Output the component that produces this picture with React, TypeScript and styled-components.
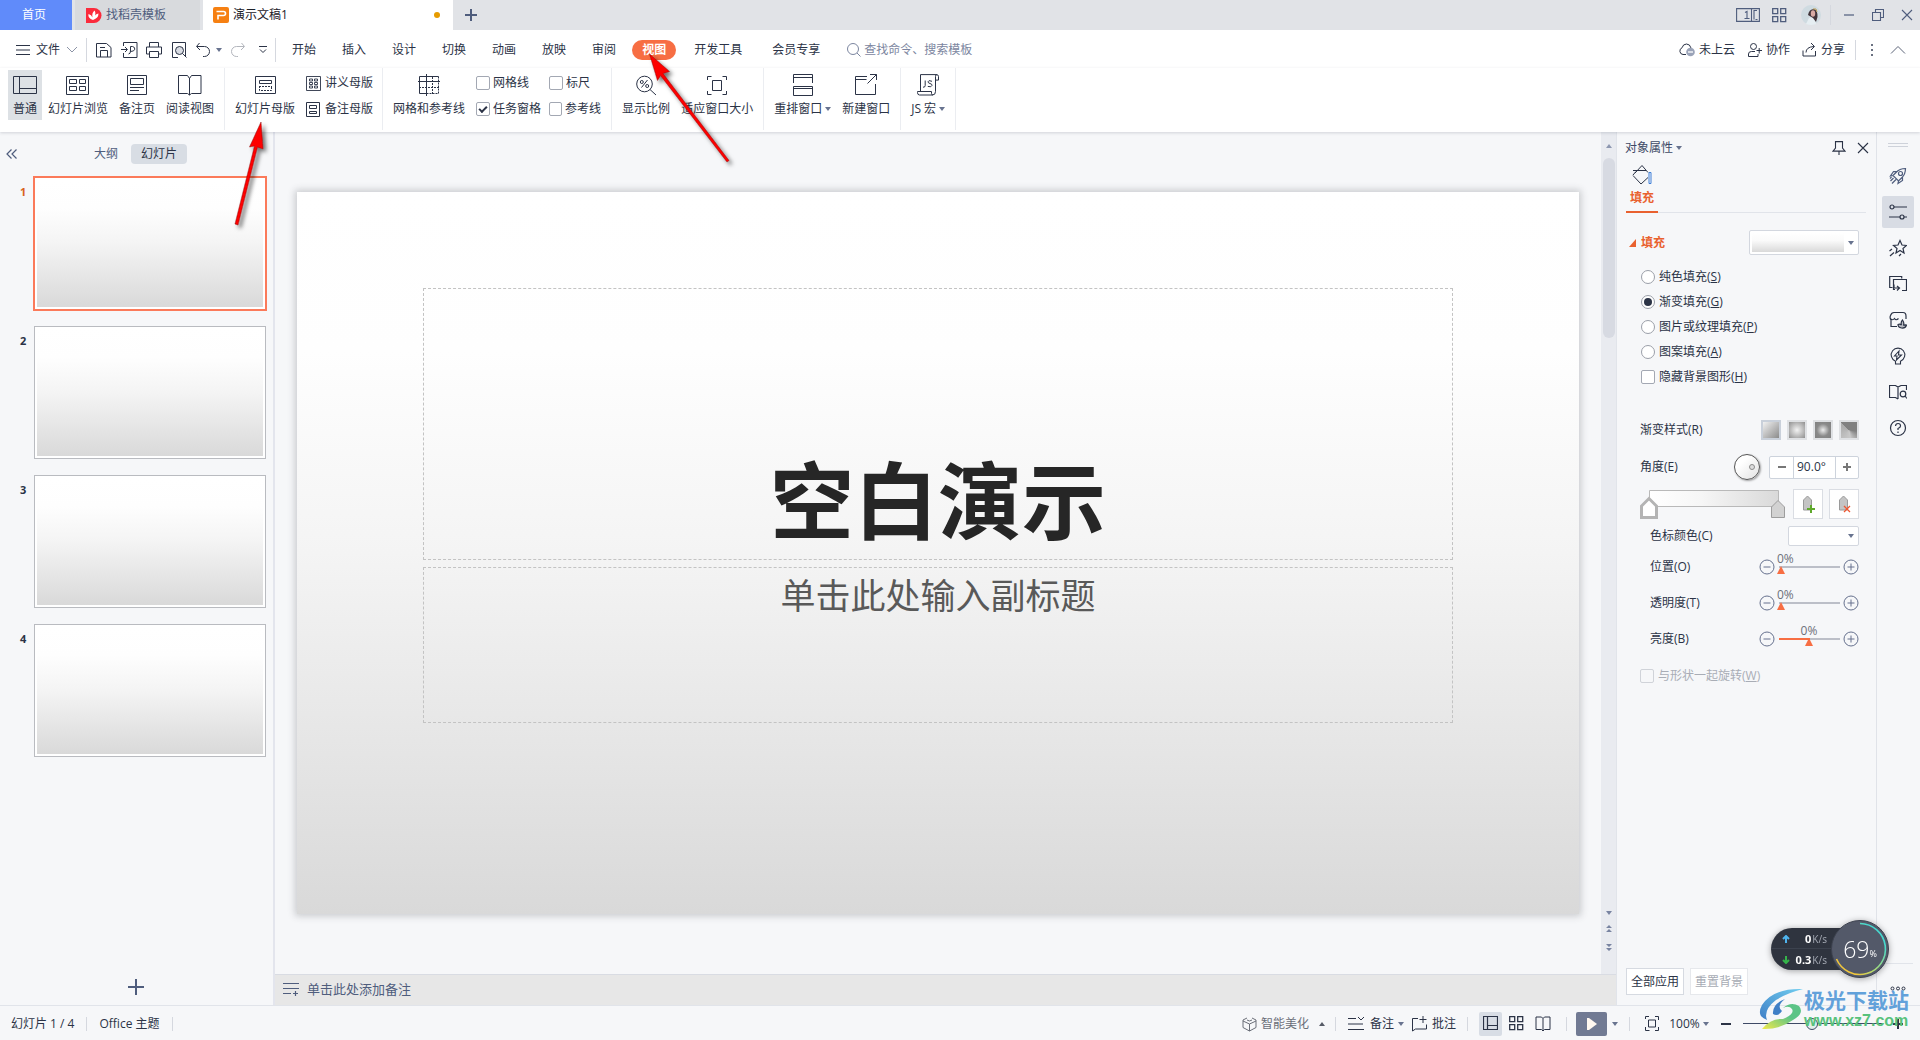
import React, { ReactNode } from "react";
import styled, { createGlobalStyle, css } from "styled-components";

const ink = "#2b3346";
const slate = "#4f5d7d";
const accent = "#e9612f";
const line = "#e1e4ea";
const panel = "#f6f7f9";
const slideFill = "linear-gradient(180deg, #ffffff 0%, #fefefe 22%, #f4f4f4 50%, #d9d9d9 100%)";

const Global = createGlobalStyle`
  *, *::before, *::after { box-sizing: border-box; }
  body { margin: 0; }
  body, button, input, select, output {
    font-family: "Open Sans", "Noto Sans CJK SC", sans-serif;
    font-size: 12px;
    line-height: 16px;
    color: ${ink};
  }
  button {
    margin: 0; padding: 0; border: 0; background: none; white-space: nowrap;
    display: inline-flex; align-items: center; justify-content: center;
  }
  svg { display: block; flex: none; }
`;

/* ---------- icons ---------- */

type IconProps = { w?: number; h?: number; color?: string; sw?: number; children: ReactNode };
const Icon = ({ w = 16, h = 16, color = ink, sw = 1, children }: IconProps) => (
  <svg width={w} height={h} viewBox={`0 0 ${w} ${h}`} fill="none" stroke={color} strokeWidth={sw} aria-hidden="true">
    {children}
  </svg>
);

const Caret = ({ color = "#68738f", up = false }: { color?: string; up?: boolean }) => (
  <svg width="6" height="4" viewBox="0 0 6 4" fill={color} aria-hidden="true">
    <path d={up ? "M0 4h6L3 0z" : "M0 0h6L3 4z"} />
  </svg>
);

const NormalIcon = () => (
  <Icon w={24} h={22}>
    <path d="M.5 2.5h23v17H.5zM6.5 2.5v17M6.5 14.5h17" />
  </Icon>
);
const SorterIcon = () => (
  <Icon w={24} h={22}>
    <path d="M.5 2.5h22v18H.5zM3.5 5.500h7v4h-7zM13.500 5.500h6v4h-6zM3.500 12.500h7v4h-7zM13.500 12.500h6v4h-6z" />
  </Icon>
);
const NotesPageIcon = () => (
  <Icon w={20} h={22}>
    <path d="M.5 1.500h19v19H.500zM3.500 4.500h13v6h-13zM3 13.500h14M3 16.500h9" />
  </Icon>
);
const BookIcon = () => (
  <Icon w={24} h={22}>
    <path d="M11.500 4.500l-2-3h-9v18h9l2 1.500 2-1.500h9.500V1.500h-9.500zM11.500 4v17" />
  </Icon>
);
const MasterIcon = () => (
  <Icon w={21} h={22}>
    <path d="M.5 2.500h20v17H.500zM4.500 6.500h12v3h-12z" />
    <path d="M4.500 12v4.500h12V12M4 12.500h13" strokeDasharray="2 1" />
  </Icon>
);
const HandoutIcon = () => (
  <Icon w={15} h={15}>
    <path d="M.5 .500h14v14H.500zM3.500 3h3v2h-3zM8.500 3h3v2h-3zM3.500 6.500h3v2h-3zM8.500 6.500h3v2h-3zM3.500 10h3v2h-3zM8.500 10h3v2h-3z" strokeWidth=".9" />
  </Icon>
);
const NotesMasterIcon = () => (
  <Icon w={15} h={15}>
    <path d="M.5 .500h13v14H.500zM3.500 3.500h7v3h-7zM3.500 9.500h7v2h-7z" />
  </Icon>
);
const GridIcon = () => (
  <Icon w={22} h={22}>
    <path d="M20.500 2.500H1.500v17h7M0 7.500h22M8.500 0v22" />
    <path d="M14.500 3v17M1 13.500h20M20.500 2.500v17h-12" strokeDasharray="2 1" />
  </Icon>
);
const ZoomIcon = () => (
  <Icon w={21} h={22}>
    <circle cx="8.500" cy="10" r="7.800" />
    <path d="M14 15.500l6 5.500M5.500 13.500l6-7.500" />
    <circle cx="5.800" cy="8" r="1.500" />
    <circle cx="11.200" cy="12" r="1.500" />
  </Icon>
);
const FitIcon = () => (
  <Icon w={20} h={22}>
    <path d="M.5 6V2.500h4M15.500 2.500h4V6M.5 17v3.500h4M15.500 20.500h4V17M5.500 6.500h9v10h-9z" />
  </Icon>
);
const ArrangeIcon = () => (
  <Icon w={20} h={22}>
    <path d="M.500 9V.500h19V9M0 3.500h20M.500 12.500h19v9H.500zM0 14.500h20" />
  </Icon>
);
const NewWindowIcon = () => (
  <Icon w={22} h={22}>
    <path d="M12 2.500H.500v18h20V10M.500 5.500h11M12.500 9.500l9-9M15 .500h6.500V6" />
  </Icon>
);
const MacroIcon = () => (
  <Icon w={22} h={22}>
    <path d="M3.500 17V.600h16q2 0 2 2v3.500h-3V2.500q0-2 1.500-2M18.500 6v11.500q0 3.500-3 3.500H2.500Q.500 21 .500 18.500V17.500h14v2q0 1.500 1.500 1.500" />
    <path d="M8.200 6.500v5q0 2-2.200 1.700M15 7.300q-3.800-1.600-4 .5 0 1.200 2 1.700 2.200.5 2 1.900-.500 2.200-4.200 1" />
  </Icon>
);

const SaveIcon = () => (
  <Icon>
    <path d="M.500 1.500h10l4.500 4v9.500H.500zM4.500 15V8.500h7V15M4 5.500h5" />
  </Icon>
);
const ExportIcon = () => (
  <Icon w={17}>
    <path d="M2.500 4V.500h13.500v15H2.500V11M0 7.500h6M4 5l2.500 2.500L4 10M7.500 12q2 0 2-3V4.500h2q2.500.5 2.300 2.700-.5 2.300-4.300 2.300" />
  </Icon>
);
const PrintIcon = () => (
  <Icon>
    <path d="M3.500 5V.500h9V5M3.500 12H.500V5h15v7h-3M3.500 9.500h9v6h-9z" />
  </Icon>
);
const PreviewIcon = () => (
  <Icon>
    <path d="M7 15.500H1.500V.500h13V15" />
    <circle cx="8.500" cy="8.500" r="4" fill="#d9dce3" />
    <path d="M11.500 11.500l4 4" />
  </Icon>
);
const UndoIcon = ({ flip = false, color = ink }: { flip?: boolean; color?: string }) => (
  <Icon color={color}>
    <g transform={flip ? "matrix(-1 0 0 1 16 0)" : undefined}>
      <path d="M4.500 1L1.500 4.500 5 8M2 4.500h7.500a5 5 0 010 10H8" />
    </g>
  </Icon>
);
const FourSquares = ({ color = ink }: { color?: string }) => (
  <Icon w={15} h={15} color={color}>
    <path d="M.700 .700h5v5h-5zM8.700 .700h5v5h-5zM.700 8.700h5v5h-5zM8.700 8.700h5v5h-5z" strokeWidth="1.300" />
  </Icon>
);
const SmallNormal = () => (
  <Icon w={15} h={15}>
    <path d="M.500 .500h14v13H.500zM4.500 .500v13M4.500 9.500h10" strokeWidth="1.200" />
  </Icon>
);
const SmallBook = () => (
  <Icon w={16}>
    <path d="M8 2.500L6.500 1H1v12.500h5.500L8 15l1.500-1.500H15V1H9.500zM8 2.500V15" />
  </Icon>
);
const CloseX = ({ color = slate }: { color?: string }) => (
  <Icon w={12} h={12} color={color}>
    <path d="M1 1l10 10M11 1L1 11" strokeWidth="1.100" />
  </Icon>
);

/* ---------- title bar ---------- */

const Shell = styled.div`
  position: relative;
  display: flex;
  flex-direction: column;
  min-height: 100vh;
  background: ${panel};
  overflow: hidden;
`;
const TitleBar = styled.header`
  display: flex;
  align-items: center;
  gap: 3px;
  height: 30px;
  background: #e1e3e7;
`;
const DocTab = styled.button<{ $kind: "home" | "idle" | "open" }>`
  && { justify-content: ${(p) => (p.$kind === "home" ? "center" : "flex-start")}; }
  height: 30px;
  width: ${(p) => ({ home: 72, idle: 125, open: 250 })[p.$kind]}px;
  padding: ${(p) => (p.$kind === "home" ? "0 4px 0 0" : "0 10px")};
  gap: 4px;
  background: ${(p) => ({ home: "#608bfa", idle: "#d8dadd", open: "#fff" })[p.$kind]};
  color: ${(p) => ({ home: "#fff", idle: slate, open: "#1d2129" })[p.$kind]};
`;
const UnsavedDot = styled.i`
  width: 6px;
  height: 6px;
  margin-left: auto;
  margin-right: 3px;
  border-radius: 50%;
  background: #e69b00;
`;
const IconButton = styled.button<{ $w?: number }>`
  width: ${(p) => p.$w ?? 24}px;
  height: 24px;
`;
const Push = styled.div`
  margin-left: auto;
`;
const WindowTools = styled.div`
  display: flex;
  align-items: center;
  gap: 5px;
  margin-left: auto;
  padding-right: 1px;
`;
const Rule = styled.span<{ $h?: number; $m?: number }>`
  width: 1px;
  height: ${(p) => p.$h ?? 20}px;
  margin: 0 ${(p) => p.$m ?? 0}px;
  background: #d5d8df;
`;

/* ---------- menu row ---------- */

const MenuRow = styled.div`
  display: flex;
  align-items: center;
  height: 38px;
  padding: 1px 14px 0 13px;
  background: #fff;
`;
const FileButton = styled.button`
  gap: 6px;
  padding: 0 8px 0 3px;
`;
const QuickTools = styled.div`
  display: flex;
  align-items: center;
  gap: 1px;
  padding: 0 2px 0 5px;
`;
const MenuTabs = styled.nav`
  display: flex;
  gap: 6px;
  padding-left: 6px;
`;
const MenuTab = styled.button<{ $wide?: boolean; $on?: boolean }>`
  height: 20px;
  padding: 0 ${(p) => (p.$wide ? 12 : 10)}px;
  border-radius: 10px;
  ${(p) =>
    p.$on &&
    css`
      background: #f76e43;
      color: #fff;
      font-weight: 700;
    `}
`;
const Search = styled.label`
  display: flex;
  align-items: center;
  gap: 2px;
  padding-left: 14px;
`;
const SearchInput = styled.input`
  width: 160px;
  padding: 0;
  border: 0;
  outline: 0;
  background: none;
  &::placeholder { color: #7c86a0; opacity: 1; }
`;
const Cloud = styled.div`
  display: flex;
  align-items: center;
  gap: 12px;
  margin-left: auto;
`;
const CloudButton = styled.button`
  gap: 4px;
`;

/* ---------- ribbon ---------- */

const Ribbon = styled.div`
  position: relative;
  z-index: 1;
  display: flex;
  height: 64px;
  padding-bottom: 2px;
  background: #fff;
  box-shadow: 0 1px 3px rgba(40, 50, 70, 0.18);
`;
const Group = styled.div<{ $first?: boolean }>`
  display: flex;
  align-items: flex-start;
  gap: 1px;
  padding: 2px 5px 0 ${(p) => (p.$first ? 8 : 5)}px;
  border-right: 1px solid #ebedf1;
`;
const BigButton = styled.button<{ $on?: boolean }>`
  && { flex-direction: column; justify-content: flex-start; }
  height: 50px;
  padding: 4px 5px 0;
  gap: 5px;
  background: ${(p) => (p.$on ? "#dde1e5" : "none")};
`;
const Caption = styled.span`
  display: inline-flex;
  align-items: center;
  gap: 3px;
`;
const SmallStack = styled.div`
  display: grid;
  grid-auto-rows: 26px;
  padding: 0 4px 0 5px;
`;
const SmallButton = styled.button`
  gap: 4px;
`;
const CheckGrid = styled.div`
  display: grid;
  grid-template-columns: 73px 52px;
  grid-auto-rows: 26px;
  padding: 0 5px;
`;
const CheckLabel = styled.label<{ $dim?: boolean; $gap?: number }>`
  display: flex;
  align-items: center;
  gap: ${(p) => p.$gap ?? 3}px;
  white-space: nowrap;
  color: ${(p) => (p.$dim ? "#a9adb6" : "inherit")};
`;
const Tick = styled.input.attrs({ type: "checkbox" })`
  appearance: none;
  display: grid;
  place-items: center;
  width: 14px;
  height: 14px;
  margin: 0;
  border: 1px solid #a3a8b3;
  border-radius: 2px;
  background: #fff;
  &:checked::after {
    content: "";
    width: 8px;
    height: 5px;
    border: solid ${ink};
    border-width: 0 0 2px 2px;
    transform: translateY(-1px) rotate(-45deg);
  }
  &:disabled { border-color: #d0d3d9; background: ${panel}; }
`;

/* ---------- workspace ---------- */

const Workspace = styled.main`
  display: flex;
  flex: 1;
  align-items: stretch;
`;
const Outline = styled.aside`
  display: flex;
  flex-direction: column;
  width: 275px;
  border-right: 2px solid #e3e5ed;
`;
const OutlineHead = styled.div`
  display: flex;
  align-items: center;
  height: 44px;
  padding-left: 6px;
`;
const OutlineTab = styled.button<{ $on?: boolean }>`
  width: ${(p) => (p.$on ? 56 : 50)}px;
  height: 20px;
  border-radius: 4px;
  background: ${(p) => (p.$on ? "#d8dde4" : "none")};
  color: ${(p) => (p.$on ? ink : slate)};
`;
const OutlineTabs = styled.div`
  display: flex;
  margin-left: 63px;
`;
const ThumbList = styled.ol`
  display: grid;
  gap: 14px;
  margin: 0;
  padding: 0 6px 0 20px;
  list-style: none;
`;
const ThumbItem = styled.li<{ $on?: boolean }>`
  display: grid;
  grid-template-columns: 13px 1fr;
  height: 135px;
  font-family: "Noto Sans", sans-serif;
  font-size: 11px;
  font-weight: 700;
  color: ${(p) => (p.$on ? "#d9631e" : ink)};
  & > span { padding-top: 8px; }
`;
const Thumb = styled.button<{ $on?: boolean }>`
  margin: ${(p) => (p.$on ? 0 : 1)}px;
  padding: 2px;
  border: ${(p) => (p.$on ? "2px solid #fb7a5a" : "1px solid #b9bbc0")};
  background: #fff;
  & > i { flex: 1; align-self: stretch; background: ${slideFill}; }
`;
const AddSlide = styled.button`
  && { margin: auto auto 10px 128px; }
`;

const Stage = styled.section`
  display: flex;
  flex: 1;
  flex-direction: column;
  min-width: 0;
`;
const StageBody = styled.div`
  display: flex;
  flex: 1;
  border-bottom: 1px solid #d9dce3;
`;
const Canvas = styled.div`
  display: flex;
  flex: 1;
  align-items: center;
  padding: 0 22px;
`;
const Slide = styled.article`
  display: grid;
  grid-template-rows: 96fr 271fr 7fr 156fr 191fr;
  width: 100%;
  aspect-ratio: 16 / 9;
  padding: 0 126px;
  background: ${slideFill};
  box-shadow: 0 0 7px 2px rgba(60, 64, 72, 0.24);
`;
const Holder = styled.div<{ $row: number; $end?: boolean }>`
  grid-row: ${(p) => p.$row};
  display: flex;
  justify-content: center;
  align-items: ${(p) => (p.$end ? "flex-end" : "flex-start")};
  padding: ${(p) => (p.$end ? "0 0 12px" : "5px 0 0")};
  border: 1px dashed #c3c3c3;
`;
const Title = styled.h1`
  margin: 0;
  font-family: "Noto Sans CJK SC", sans-serif;
  font-size: 84px;
  line-height: 100px;
  font-weight: 700;
  color: #262626;
`;
const Subtitle = styled.p`
  margin: 0;
  font-family: "Noto Sans CJK SC", sans-serif;
  font-size: 35px;
  line-height: 42px;
  font-weight: 400;
  color: #595959;
`;
const ScrollBar = styled.div`
  display: flex;
  flex-direction: column;
  align-items: center;
  width: 15px;
  padding: 12px 0 23px;
  gap: 10px;
  background: #e9ebf0;
`;
const ScrollThumb = styled.i`
  width: 12px;
  height: 180px;
  margin-bottom: auto;
  border-radius: 6px;
  background: #d7dae2;
`;
const Notes = styled.div`
  display: flex;
  align-items: center;
  gap: 8px;
  height: 30px;
  padding: 0 0 2px 8px;
  background: #e7e7e7;
  color: ${slate};
  font-size: 13px;
`;

/* ---------- properties panel ---------- */

const Props = styled.aside`
  display: flex;
  flex-direction: column;
  width: 261px;
  padding: 0 10px 0 9px;
  border-left: 1px solid ${line};
  border-right: 1px solid #e0e3e9;
`;
const PropsHead = styled.div`
  display: flex;
  align-items: center;
  gap: 8px;
  height: 32px;
  margin: 0 -3px 0 -1px;
  color: #3e4a66;
`;
const TabStrip = styled.div`
  display: flex;
  border-bottom: 1px solid ${line};
`;
const FillTab = styled.button`
  && { flex-direction: column; }
  width: 32px;
  height: 49px;
  margin-bottom: -1px;
  padding-bottom: 4px;
  gap: 5px;
  border-bottom: 2px solid ${accent};
  color: ${accent};
  font-weight: 700;
`;
const Section = styled.div`
  display: flex;
  align-items: center;
  gap: 5px;
  height: 25px;
  margin: 17px 7px 9px 3px;
  color: ${accent};
  font-weight: 700;
`;
const SelectBox = styled.span<{ $w: number; $h: number }>`
  position: relative;
  display: inline-flex;
  align-items: center;
  width: ${(p) => p.$w}px;
  height: ${(p) => p.$h}px;
  margin-left: auto;
  border: 1px solid #d3d7df;
  border-radius: 2px;
  background: #fff;
  & > svg { position: absolute; right: 4px; pointer-events: none; }
`;
const Select = styled.select<{ $fill?: boolean }>`
  appearance: none;
  width: ${(p) => (p.$fill ? "92px" : "100%")};
  height: ${(p) => (p.$fill ? "19px" : "100%")};
  margin-left: ${(p) => (p.$fill ? 2 : 0)}px;
  border: 0;
  background: ${(p) => (p.$fill ? "linear-gradient(#fff 0%, #fafafa 40%, #d9d9d9 100%)" : "none")};
`;
const Options = styled.div`
  display: grid;
  grid-auto-rows: 25px;
  padding-left: 15px;
`;
const Radio = styled.input.attrs({ type: "radio", name: "fill" })`
  appearance: none;
  display: grid;
  place-items: center;
  width: 14px;
  height: 14px;
  margin: 0;
  border: 1px solid #9b9fa9;
  border-radius: 50%;
  background: #fff;
  &:checked::after {
    content: "";
    width: 8px;
    height: 8px;
    border-radius: 50%;
    background: ${ink};
  }
`;
const Field = styled.div<{ $h: number; $top: number; $indent?: boolean }>`
  display: flex;
  align-items: center;
  height: ${(p) => p.$h}px;
  margin-top: ${(p) => p.$top}px;
  padding: 0 7px 0 ${(p) => (p.$indent ? 24 : 14)}px;
`;
const Swatches = styled.div`
  display: flex;
  gap: 6px;
  margin-left: auto;
`;
const Swatch = styled.button<{ $fill: string; $on?: boolean }>`
  width: 20px;
  height: 20px;
  border: 2px solid ${(p) => (p.$on ? "#c9d0da" : "#dfe1e4")};
  background: ${(p) => p.$fill};
`;
const Dial = styled.button`
  && { justify-content: flex-end; }
  width: 26px;
  height: 26px;
  margin-left: auto;
  margin-right: 9px;
  padding-right: 4px;
  border: 1px solid #555;
  border-radius: 50%;
  background: linear-gradient(135deg, #fff 30%, #e2e2e2);
  box-shadow: 1px 1px 2px rgba(0, 0, 0, 0.35);
  & > i { width: 6px; height: 6px; border: 1px solid #8b8b8b; border-radius: 50%; background: #ddd; }
`;
const Spinner = styled.div`
  display: grid;
  grid-template-columns: 23px 43px 22px;
  height: 23px;
  border: 1px solid #cdd3dc;
  border-radius: 2px;
  background: #fff;
`;
const SpinInput = styled.input`
  width: 100%;
  padding: 0 3px;
  border: solid #cdd3dc;
  border-width: 0 1px;
  outline: 0;
`;
const ToolButton = styled.button`
  width: 30px;
  height: 30px;
  border: 1px solid #dadde3;
  background: #fff;
`;
const GradientRow = styled.div`
  display: flex;
  align-items: center;
  gap: 6px;
  margin: 9px 7px 0 14px;
`;
const SliderUnit = styled.div`
  display: flex;
  align-items: center;
  gap: 2px;
  margin-left: auto;
`;
const SliderStack = styled.div<{ $center?: boolean }>`
  display: flex;
  flex-direction: column;
  width: 64px;
  margin-bottom: 8px;
  & > output { line-height: 14px; color: #6d7079; text-align: ${(p) => (p.$center ? "center" : "left")}; }
`;
const Range = styled.input.attrs({ type: "range" })<{ $filled?: boolean }>`
  appearance: none;
  width: 64px;
  height: 8px;
  margin: 0;
  background: linear-gradient(90deg, #f76e43 ${(p) => (p.$filled ? 50 : 0)}%, #bcbfc8 ${(p) => (p.$filled ? 50 : 0)}%) 2px 0 / 61px 2px no-repeat;
  &::-webkit-slider-thumb {
    appearance: none;
    width: 8px;
    height: 8px;
    background: #f76e43;
    clip-path: polygon(50% 0, 100% 100%, 0 100%);
  }
`;
const PanelActions = styled.div`
  display: flex;
  gap: 6px;
  margin-top: auto;
  padding-bottom: 10px;
`;
const PanelButton = styled.button`
  width: 58px;
  height: 27px;
  border: 1px solid #d6dae1;
  background: #fff;
  &:disabled { border-color: #e6e8ec; color: #a7abb4; }
`;

/* ---------- side rail ---------- */

const Rail = styled.aside`
  display: flex;
  flex-direction: column;
  align-items: center;
  gap: 4px;
  width: 43px;
  padding: 11px 1px 14px 0;
`;
const Grip = styled.i`
  width: 20px;
  height: 4px;
  margin-bottom: 9px;
  border: solid #ced2da;
  border-width: 1px 0;
`;
const RailButton = styled.button<{ $on?: boolean }>`
  width: 32px;
  height: 32px;
  border-radius: 2px;
  background: ${(p) => (p.$on ? "#d8dce4" : "none")};
`;
const RailFoot = styled.div`
  display: flex;
  justify-content: center;
  width: 30px;
  margin-top: auto;
  padding-top: 22px;
  border-top: 1px solid ${line};
`;

/* ---------- status bar ---------- */

const Status = styled.footer`
  display: flex;
  align-items: center;
  height: 35px;
  padding: 1px 15px 0 11px;
  border-top: 1px solid ${line};
  white-space: nowrap;
`;
const StatusButton = styled.button<{ $dim?: boolean }>`
  gap: 4px;
  color: ${(p) => (p.$dim ? "#6a6e78" : ink)};
`;
const StatusTools = styled.div`
  display: flex;
  align-items: center;
  margin-left: auto;
`;
const ViewButton = styled.button<{ $on?: boolean }>`
  width: 23px;
  height: 24px;
  margin-right: 3px;
  border-radius: 2px;
  background: ${(p) => (p.$on ? "#d8dde5" : "none")};
`;
const PlayButton = styled.button`
  width: 31px;
  height: 24px;
  margin-right: 5px;
  border-radius: 2px;
  background: #717a93;
`;
const ZoomRange = styled.input.attrs({ type: "range" })`
  appearance: none;
  width: 140px;
  height: 12px;
  margin: 0 8px;
  background: linear-gradient(#3e4a66, #3e4a66) 0 5px / 100% 1px no-repeat;
  &::-webkit-slider-thumb {
    appearance: none;
    width: 12px;
    height: 12px;
    border: 1px solid #3e4a66;
    border-radius: 50%;
    background: #e3f0ea;
  }
`;

/* ---------- floating overlays ---------- */

const Arrows = styled.svg`
  position: absolute;
  z-index: 2;
  top: 0;
  left: 0;
  pointer-events: none;
`;
const NetMeter = styled.div`
  position: absolute;
  z-index: 3;
  right: 31px;
  bottom: 61px;
  display: flex;
  align-items: center;
  filter: drop-shadow(0 1px 3px rgba(0, 0, 0, 0.35));
`;
const Speeds = styled.div`
  display: grid;
  width: 78px;
  height: 42px;
  margin-right: -18px;
  padding-right: 22px;
  border-radius: 21px 0 0 21px;
  background: linear-gradient(#2f343f 0 20px, #3c424e 20px 21px, #2f343f 21px);
  color: #fff;
`;
const Speed = styled.div`
  display: flex;
  align-items: center;
  justify-content: flex-end;
  gap: 1px;
  font-family: "Noto Sans", sans-serif;
  font-size: 11px;
  font-weight: 700;
  line-height: 20px;
  & > svg { margin-right: auto; margin-left: 11px; }
  & > small { font-size: 10px; font-weight: 400; color: #9ea3ad; }
`;
const Gauge = styled.div`
  position: relative;
  display: flex;
  align-items: center;
  justify-content: center;
  width: 58px;
  height: 60px;
  color: #fff;
  font-family: "Open Sans", sans-serif;
  font-size: 23px;
  font-weight: 300;
  & > svg { position: absolute; left: 0; top: 0; }
  & > b { position: relative; font-weight: 300; }
  & > small { position: relative; font-size: 9px; font-weight: 400; padding-top: 9px; }
`;
const Watermark = styled.div`
  position: absolute;
  z-index: 3;
  right: 11px;
  bottom: 10px;
  display: flex;
  gap: 1px;
  pointer-events: none;
`;
const WatermarkText = styled.div`
  display: grid;
  font-family: "Noto Sans CJK SC", sans-serif;
  font-size: 21px;
  line-height: 23px;
  font-weight: 700;
  color: #62a1da;
  & > span { font-family: "Liberation Sans", sans-serif; font-size: 16px; line-height: 18px; color: #58c27c; }
`;

/* ---------- composed parts ---------- */

const RoundSign = ({ plus = false }: { plus?: boolean }) => (
  <Icon color="#66718e">
    <circle cx="8" cy="8" r="7" />
    <path d={plus ? "M4.500 8h7M8 4.500v7" : "M4.500 8h7"} />
  </Icon>
);

const SliderField = ({ label, value, top }: { label: string; value: number; top: number }) => (
  <Field $h={36} $top={top} $indent>
    <label htmlFor={label}>{label}</label>
    <SliderUnit>
      <button aria-label="减少"><RoundSign /></button>
      <SliderStack $center={value > 0}>
        <output htmlFor={label}>0%</output>
        <Range id={label} defaultValue={value} $filled={value > 0} />
      </SliderStack>
      <button aria-label="增加"><RoundSign plus /></button>
    </SliderUnit>
  </Field>
);

const fills: [string, string][] = [["纯色填充", "S"], ["渐变填充", "G"], ["图片或纹理填充", "P"], ["图案填充", "A"]];
const gradientStyles = [
  "linear-gradient(135deg, #f1f1f1, #8b8b8b)",
  "radial-gradient(circle, #f3f3f3, #8f8f8f)",
  "radial-gradient(circle, #ececec, #8a8a8a 55%, #808080)",
  "conic-gradient(from -45deg, #808080 0 40%, #c9c9c9 60%, #aaa 100%)",
];

const railIcons: ReactNode[] = [
  <Icon w={18} h={18} color={slate} sw={1.200}>
    <path d="M4 8.500L7 5.500Q10.500 1.500 16.500 1.500 16.500 7.500 12.500 11L9.500 14zM4 8.500l-2.500.5 3-4.500L8 4.600M9.500 14l-.5 2.500 4.500-3V10M1.500 14l3-3M3 16.500l4-4M1 11.500l1.500-1.500" />
    <circle cx="11.500" cy="6.500" r="2" />
  </Icon>,
  <Icon w={18} h={18} sw={1.200}>
    <circle cx="3" cy="4" r="2" />
    <circle cx="13" cy="14" r="2" />
    <path d="M5 4H18M0 14h11M15 14H18" />
  </Icon>,
  <Icon w={18} h={18} sw={1.200}>
    <path d="M11 1.500l2 4.500 4.500.5-3.500 3 1 4.500-4-2.500-4 2.500 1-4.500-3.500-3L9 6zM.5 12l2.500-2M1 17l4-3.500M10 17l2-2" />
  </Icon>,
  <Icon w={18} h={18} sw={1.200}>
    <path d="M3.500 12.500H.700V1.500h12v2M6 14.500H4.500v-10h13v11H13M5 9.500V13h5M8 11l2.500 2L8 15.500" />
  </Icon>,
  <Icon w={18} h={18} sw={1.200}>
    <path d="M8 15.500H2V9Q.500 7 1.500 4.500 2.500 1.500 5 1.500h9q3 0 3 3.500v3M1.500 7.500q2 2.500 4 0 1.500 2.500 4 0" />
    <path d="M9 13.500q0 3 3.500 3.500 4 .5 5-3-2-.5-3 .5 1-3-1-5.500-2 2-1 5-1.500-1.500-3.500-.5z" fill={ink} fillOpacity=".3" />
  </Icon>,
  <Icon w={18} h={18} sw={1.200}>
    <path d="M6.500 14.200A6.800 6.800 0 1111.500 14.200V17h-5zM10 4l-4.500 5h2.500l-.5 4L12.500 8H9.500z" strokeWidth="1.100" />
  </Icon>,
  <Icon w={18} h={18} sw={1.200}>
    <path d="M17.500 7V2.500H12L9 4 6.500 2.500h-6v12h6L9 16M9 4v12" />
    <circle cx="14" cy="11" r="2.800" />
    <path d="M16 13l2 2.500" />
  </Icon>,
  <Icon w={18} h={18} sw={1.200}>
    <circle cx="9" cy="9" r="7.500" />
    <path d="M6.500 7q.2-2.500 2.600-2.500T11.500 7Q11.500 8.500 9 9.500V11M9 12.500V14" />
  </Icon>,
];
const railNames = ["新建", "对象属性", "动画", "切换", "素材", "灵感", "帮助手册", "帮助"];

export default function App() {
  return (
    <Shell>
      <Global />
      <TitleBar>
        <DocTab $kind="home">首页</DocTab>
        <DocTab $kind="idle">
          <svg width="17" height="17" viewBox="0 0 17 17" aria-hidden="true">
            <path d="M1 1h8a7.500 7.500 0 010 15H1z" fill="#fb2b3c" />
            <path d="M8 13Q2.500 11 3.500 7q3 .5 4 3.500Q6.500 6 9.500 3.500q2 3-.5 7Q10 7 13.500 6.500 13.500 11 8 13z" fill="#fff" />
          </svg>
          找稻壳模板
        </DocTab>
        <DocTab $kind="open">
          <svg width="16" height="16" viewBox="0 0 16 16" aria-hidden="true">
            <rect width="16" height="16" rx="2" fill="#f68012" />
            <path d="M3.500 4.500h7q2 0 2 2t-2 2H5V12.500" fill="none" stroke="#fff" strokeWidth="1.600" />
          </svg>
          演示文稿1
          <UnsavedDot />
        </DocTab>
        <IconButton $w={30} aria-label="新建标签">
          <Icon w={12} h={12} color={slate}><path d="M6 0v12M0 6h12" strokeWidth="2" /></Icon>
        </IconButton>
        <WindowTools>
          <IconButton aria-label="切换窗口">
            <Icon w={24} h={14} color={slate}>
              <path d="M.6 .600h22.800v12.800H.600zM15.500 1v12M21 2.500h-3v9M19.500 11.500h2" strokeWidth="1.100" />
              <path d="M9 4.500l2-1v7.500M8.500 10.500h5" strokeWidth="1.100" />
            </Icon>
          </IconButton>
          <IconButton $w={28} aria-label="应用"><FourSquares color={slate} /></IconButton>
          <IconButton $w={26} aria-label="账户">
            <svg width="20" height="20" viewBox="0 0 20 20" aria-hidden="true">
              <circle cx="10" cy="10" r="10" fill="#cfdbe1" />
              <path d="M5 19l3-6 3-1 3 2 1 5q-5 2-10 0z" fill="#e6eef2" />
              <path d="M7 10q1-6 6-6 4 2 3.500 8l-1.500 5-3-4z" fill="#40343a" />
              <ellipse cx="12" cy="8.500" rx="2.200" ry="3.200" fill="#d8aaa4" />
              <path d="M12 4l3 0 1 3" stroke="#b99b54" fill="none" />
            </svg>
          </IconButton>
          <Rule $m={1} />
          <IconButton aria-label="最小化"><Icon w={12} h={12} color={slate}><path d="M1 6h10" strokeWidth="1.200" /></Icon></IconButton>
          <IconButton aria-label="还原">
            <Icon w={12} h={12} color={slate}><path d="M.5 3.500h8v8h-8zM3.500 3.500v-3h8v8h-3" strokeWidth="1.100" /></Icon>
          </IconButton>
          <IconButton aria-label="关闭"><CloseX /></IconButton>
        </WindowTools>
      </TitleBar>

      <MenuRow>
        <FileButton>
          <Icon w={14} h={12}><path d="M0 1.500h14M0 6h14M0 10.500h14" /></Icon>
          文件
          <Icon w={12} h={8} color="#8c94a6"><path d="M1 1l5 5 5-5" /></Icon>
        </FileButton>
        <Rule $h={24} />
        <QuickTools>
          <IconButton aria-label="保存"><SaveIcon /></IconButton>
          <IconButton aria-label="输出"><ExportIcon /></IconButton>
          <IconButton aria-label="打印"><PrintIcon /></IconButton>
          <IconButton aria-label="预览"><PreviewIcon /></IconButton>
          <IconButton $w={22} aria-label="撤销"><UndoIcon /></IconButton>
          <IconButton $w={8} aria-label="撤销列表"><Caret /></IconButton>
          <IconButton $w={28} aria-label="恢复"><UndoIcon flip color="#b3b6bd" /></IconButton>
          <IconButton $w={20} aria-label="更多"><Icon w={8} h={8}><path d="M0 .500h8M1 3.500l3 3 3-3" /></Icon></IconButton>
        </QuickTools>
        <Rule $h={24} />
        <MenuTabs>
          {["开始", "插入", "设计", "切换", "动画", "放映", "审阅", "视图", "开发工具", "会员专享"].map((t) => (
            <MenuTab key={t} $wide={t.length > 2} $on={t === "视图"}>{t}</MenuTab>
          ))}
        </MenuTabs>
        <Search>
          <Icon color="#7c86a0"><circle cx="7" cy="7" r="5.500" /><path d="M11 11l3.500 3.500" /></Icon>
          <SearchInput aria-label="查找命令" placeholder="查找命令、搜索模板" />
        </Search>
        <Cloud>
          <CloudButton>
            <Icon>
              <path d="M7 12.500H4A3.500 3.500 0 013 5.800Q4 2 7.500 2t4.500 4" />
              <circle cx="11.500" cy="10" r="4.300" fill="#9aa3b8" stroke="none" />
              <path d="M9 10h5" stroke="#fff" strokeWidth="1.300" />
            </Icon>
            未上云
          </CloudButton>
          <CloudButton>
            <Icon w={15}>
              <circle cx="6.500" cy="4.500" r="3" />
              <path d="M11 12v2.500H1.500V12q0-2.500 3-2.500H8M9.500 8.500H15M12.200 6v5.500" />
            </Icon>
            协作
          </CloudButton>
          <CloudButton>
            <Icon w={15}>
              <path d="M1 8.500V14h12.500V9M4 10.500q0-5.500 8-6M9 1l3.500 3.500L9 8" />
            </Icon>
            分享
          </CloudButton>
          <Rule $m={-2} />
          <IconButton $w={12} aria-label="选项">
            <svg width="2" height="12" viewBox="0 0 2 12" fill="#6a7181"><path d="M0 0h2v2H0zM0 5h2v2H0zM0 10h2v2H0z" /></svg>
          </IconButton>
          <IconButton $w={16} aria-label="折叠功能区"><Icon w={16} h={8} color="#5d6579"><path d="M1 7.500l7-7 7 7" /></Icon></IconButton>
        </Cloud>
      </MenuRow>

      <Ribbon>
        <Group $first>
          <BigButton $on><NormalIcon />普通</BigButton>
          <BigButton><SorterIcon />幻灯片浏览</BigButton>
          <BigButton><NotesPageIcon />备注页</BigButton>
          <BigButton><BookIcon />阅读视图</BigButton>
        </Group>
        <Group>
          <BigButton><MasterIcon />幻灯片母版</BigButton>
          <SmallStack>
            <SmallButton><HandoutIcon />讲义母版</SmallButton>
            <SmallButton><NotesMasterIcon />备注母版</SmallButton>
          </SmallStack>
        </Group>
        <Group>
          <BigButton><GridIcon />网格和参考线</BigButton>
          <CheckGrid>
            <CheckLabel><Tick />网格线</CheckLabel>
            <CheckLabel><Tick />标尺</CheckLabel>
            <CheckLabel><Tick defaultChecked />任务窗格</CheckLabel>
            <CheckLabel><Tick />参考线</CheckLabel>
          </CheckGrid>
        </Group>
        <Group>
          <BigButton><ZoomIcon />显示比例</BigButton>
          <BigButton><FitIcon />适应窗口大小</BigButton>
        </Group>
        <Group>
          <BigButton><ArrangeIcon /><Caption>重排窗口<Caret /></Caption></BigButton>
          <BigButton><NewWindowIcon />新建窗口</BigButton>
        </Group>
        <Group>
          <BigButton><MacroIcon /><Caption>JS 宏<Caret /></Caption></BigButton>
        </Group>
      </Ribbon>

      <Workspace>
        <Outline>
          <OutlineHead>
            <IconButton $w={12} aria-label="收起">
              <Icon w={12} h={10} color={slate}><path d="M5.500 .500L1 5l4.500 4.500M10.500 .500L6 5l4.500 4.500" strokeWidth="1.200" /></Icon>
            </IconButton>
            <OutlineTabs>
              <OutlineTab>大纲</OutlineTab>
              <OutlineTab $on>幻灯片</OutlineTab>
            </OutlineTabs>
          </OutlineHead>
          <ThumbList>
            {[1, 2, 3, 4].map((n) => (
              <ThumbItem key={n} $on={n === 1}>
                <span>{n}</span>
                <Thumb $on={n === 1} aria-label={`幻灯片 ${n}`}><i /></Thumb>
              </ThumbItem>
            ))}
          </ThumbList>
          <AddSlide aria-label="新建幻灯片">
            <Icon color={slate}><path d="M8 0v16M0 8h16" strokeWidth="2" /></Icon>
          </AddSlide>
        </Outline>

        <Stage>
          <StageBody>
            <Canvas>
              <Slide>
                <Holder $row={2} $end><Title>空白演示</Title></Holder>
                <Holder $row={4}><Subtitle>单击此处输入副标题</Subtitle></Holder>
              </Slide>
            </Canvas>
            <ScrollBar>
              <Caret up color="#8d97b0" />
              <ScrollThumb />
              <Caret color="#7984a1" />
              <Icon w={6} h={8}><path d="M0 3h6L3 0zM0 7h6L3 4z" fill="#7984a1" stroke="none" /></Icon>
              <Icon w={6} h={8}><path d="M0 1h6L3 4zM0 5h6L3 8z" fill="#7984a1" stroke="none" /></Icon>
            </ScrollBar>
          </StageBody>
          <Notes>
            <Icon w={16} h={14} color={slate}><path d="M0 1.500h16M0 6.500h16M0 11.500h8M12.500 9v5M10 11.500h5" strokeWidth="1.200" /></Icon>
            单击此处添加备注
          </Notes>
        </Stage>

        <Props>
          <PropsHead>
            <Caption>对象属性<Caret /></Caption>
            <Push />
            <IconButton $w={20} aria-label="固定">
              <Icon w={14} h={14}><path d="M3.500 .600h7v6.500l2.500 3H1l2.500-3zM7 10v4" strokeWidth="1.100" /></Icon>
            </IconButton>
            <IconButton $w={12} aria-label="关闭面板"><CloseX color={ink} /></IconButton>
          </PropsHead>
          <TabStrip>
            <FillTab>
              <Icon w={20} h={20}>
                <path d="M1 5.500h13M3 8l7-7.500 6 7M1 10l3-3.500M1 10.500l8 8.500 7-6.500" />
                <path d="M17 7.500h2v11h-2z" stroke="#3f7fd8" />
              </Icon>
              填充
            </FillTab>
          </TabStrip>
          <Section>
            <svg width="7" height="8" viewBox="0 0 7 8" fill={accent}><path d="M7 0v8H0z" /></svg>
            填充
            <SelectBox $w={110} $h={25}>
              <Select $fill aria-label="填充预设"><option aria-label="灰白渐变" /></Select>
              <Caret />
            </SelectBox>
          </Section>
          <Options>
            {fills.map(([name, key]) => (
              <CheckLabel key={key} $gap={4}>
                <Radio defaultChecked={key === "G"} />
                <span>{name}(<u>{key}</u>)</span>
              </CheckLabel>
            ))}
            <CheckLabel $gap={4}><Tick /><span>隐藏背景图形(<u>H</u>)</span></CheckLabel>
          </Options>
          <Field $h={20} $top={31}>
            渐变样式(R)
            <Swatches>
              {gradientStyles.map((f, i) => <Swatch key={f} $fill={f} $on={i === 0} aria-label={`渐变样式 ${i + 1}`} />)}
            </Swatches>
          </Field>
          <Field $h={26} $top={14}>
            <label htmlFor="angle">角度(E)</label>
            <Dial aria-label="旋转角度"><i /></Dial>
            <Spinner>
              <button aria-label="减小角度"><Icon w={8} h={8} color="#777" sw={2}><path d="M0 4h8" /></Icon></button>
              <SpinInput id="angle" defaultValue="90.0°" />
              <button aria-label="增大角度"><Icon w={8} h={8} color="#777" sw={2}><path d="M0 4h8M4 0v8" /></Icon></button>
            </Spinner>
          </Field>
          <GradientRow>
            <svg width="147" height="30" viewBox="0 0 147 30" role="img" aria-label="渐变光圈">
              <defs>
                <linearGradient id="stops"><stop offset="0" stopColor="#fff" /><stop offset=".4" stopColor="#f6f6f6" /><stop offset="1" stopColor="#d9d9d9" /></linearGradient>
              </defs>
              <path d="M9.500 1.500h129v16H9.500z" fill="url(#stops)" stroke="#b9b9b9" />
              <path d="M1.500 28.500V17L9 9.500l7.500 7.500v11.500z" fill="#fff" stroke="#b4b4b4" strokeWidth="3" />
              <path d="M131.500 28.500V18l6.500-6.500 6.500 6.500v10.500z" fill="#d2d2d2" stroke="#9d9d9d" />
            </svg>
            <ToolButton aria-label="添加色标">
              <Icon w={14} h={18}><path d="M2.500 15V5l4-4 4 4v10z" fill="#c4c4c4" stroke="#9a9a9a" /><path d="M10 10v8M6 14h8" stroke="#5fa92c" strokeWidth="2" /></Icon>
            </ToolButton>
            <ToolButton aria-label="删除色标">
              <Icon w={14} h={18}><path d="M2.500 15V5l4-4 4 4v10z" fill="#c4c4c4" stroke="#9a9a9a" /><path d="M7 11l6 6M13 11l-6 6" stroke="#f0562f" strokeWidth="1.300" /></Icon>
            </ToolButton>
          </GradientRow>
          <Field $h={20} $top={7} $indent>
            <label htmlFor="stopColor">色标颜色(C)</label>
            <SelectBox $w={71} $h={20}>
              <Select id="stopColor"><option aria-label="白色" /></Select>
              <Caret />
            </SelectBox>
          </Field>
          <SliderField label="位置(O)" value={0} top={3} />
          <SliderField label="透明度(T)" value={0} top={0} />
          <SliderField label="亮度(B)" value={50} top={0} />
          <Field $h={25} $top={6}>
            <CheckLabel $dim $gap={4}><Tick disabled /><span>与形状一起旋转(<u>W</u>)</span></CheckLabel>
          </Field>
          <PanelActions>
            <PanelButton>全部应用</PanelButton>
            <PanelButton disabled>重置背景</PanelButton>
          </PanelActions>
        </Props>

        <Rail>
          <Grip />
          {railIcons.map((icon, i) => (
            <RailButton key={railNames[i]} $on={i === 1} aria-label={railNames[i]}>{icon}</RailButton>
          ))}
          <RailFoot>
            <Icon w={16} h={5}><circle cx="2.500" cy="2.500" r="1.500" /><circle cx="8" cy="2.500" r="1.500" /><circle cx="13.500" cy="2.500" r="1.500" /></Icon>
          </RailFoot>
        </Rail>
      </Workspace>

      <Status>
        <span>幻灯片 1 / 4</span>
        <Rule $h={14} $m={12} />
        <span>Office 主题</span>
        <Rule $h={14} $m={12} />
        <StatusTools>
          <StatusButton $dim>
            <Icon w={15} color="#6a6e78"><path d="M5 2L1 4v7.500L7.500 15l6.500-3.500V4l-4-2M1 5l6.500 3L14 5M7.500 8v7M5 4l2.500 1L10 4" /></Icon>
            智能美化
          </StatusButton>
          <IconButton $w={26} aria-label="美化选项"><Caret up color="#555a66" /></IconButton>
          <Rule $h={14} />
          <StatusButton>
            <Icon w={30} h={14}><path d="M12 1.500h8M12 7h15M12 12.500h16M22 0l3 3 3-3" /></Icon>
            备注
          </StatusButton>
          <IconButton $w={14} aria-label="备注选项"><Caret /></IconButton>
          <StatusButton>
            <Icon w={20}><path d="M10 2.500H4.500V15l3-2H18.500V8.500M15 0v7M11.500 3.500h7" /></Icon>
            批注
          </StatusButton>
          <Rule $h={14} $m={11} />
          <ViewButton $on aria-label="普通视图"><SmallNormal /></ViewButton>
          <ViewButton aria-label="浏览视图"><FourSquares /></ViewButton>
          <ViewButton aria-label="阅读视图"><SmallBook /></ViewButton>
          <Rule $h={14} $m={9} />
          <PlayButton aria-label="放映">
            <svg width="10" height="12" viewBox="0 0 10 12" fill="#fff8f0"><path d="M0 0h2l8 6-8 6H0z" /></svg>
          </PlayButton>
          <Caret />
          <Rule $h={14} $m={11} />
          <StatusButton aria-label="最佳显示比例">
            <Icon w={20} h={15}><path d="M4.500 3V.500H8M14 .500h3.500V4M4.500 11v3.500h4M14 14.500h3.500V11M7.500 4h7v7h-7z" /></Icon>
          </StatusButton>
          <IconButton $w={56} aria-label="显示比例">
            <Caption>100%<Caret /></Caption>
          </IconButton>
          <IconButton $w={18} aria-label="缩小"><Icon w={10} h={4} sw={2}><path d="M0 2h10" /></Icon></IconButton>
          <ZoomRange aria-label="缩放" defaultValue={49} />
          <IconButton $w={14} aria-label="放大"><Icon w={10} h={10} sw={2}><path d="M0 5h10M5 0v10" /></Icon></IconButton>
        </StatusTools>
      </Status>

      <Arrows width="760" height="240" viewBox="0 0 760 240" aria-hidden="true">
        <defs>
          <filter id="cast" x="-20%" y="-20%" width="150%" height="150%">
            <feDropShadow dx="3" dy="3" stdDeviation="2" floodColor="#000" floodOpacity=".55" />
          </filter>
        </defs>
        <g fill="#fd0000" stroke="#8e1010" strokeWidth=".5" filter="url(#cast)">
          <path d="M649.500 54l20 17.500-6.500 2L729 160.500l-2 1.500L660.500 75.500 657.500 80.500z" />
          <path d="M261 122l2 27-5.500-2L238 225l-3-1L254.500 146l-5 1z" />
        </g>
      </Arrows>

      <NetMeter>
        <Speeds>
          <Speed><Icon w={8} h={8} color="#4fb4ee" sw={2}><path d="M4 8V1M1 4l3-3 3 3" /></Icon>0<small>K/s</small></Speed>
          <Speed><Icon w={8} h={8} color="#35b44a" sw={2}><path d="M4 0v7M1 4l3 3 3-3" /></Icon>0.3<small>K/s</small></Speed>
        </Speeds>
        <Gauge>
          <svg width="58" height="60" viewBox="0 0 58 60" aria-hidden="true">
            <defs>
              <linearGradient id="ring" x1="1" y1="0" x2="0" y2="1"><stop offset=".2" stopColor="#46d8cf" /><stop offset=".55" stopColor="#a6dd79" /><stop offset=".8" stopColor="#f0c63c" /></linearGradient>
            </defs>
            <circle cx="29" cy="30" r="28.500" fill="#535969" stroke="#3d424f" />
            <path d="M29 4.500A25.500 25.500 0 115.500 40" fill="none" stroke="url(#ring)" strokeWidth="1.600" />
          </svg>
          <b>69</b><small>%</small>
        </Gauge>
      </NetMeter>

      <Watermark>
        <svg width="44" height="42" viewBox="0 0 44 42" aria-hidden="true">
          <defs>
            <linearGradient id="blue" x1="0" y1="1" x2="1" y2="0"><stop offset="0" stopColor="#3f7fc6" /><stop offset="1" stopColor="#6fcdf0" /></linearGradient>
            <linearGradient id="green" x1="0" y1="1" x2="1" y2="0"><stop offset="0" stopColor="#f2ea4a" /><stop offset=".6" stopColor="#5cc487" /></linearGradient>
          </defs>
          <path d="M44 1Q14 0 3 17-3 28 8 32 4 22 17 12 28 5 44 1z" fill="url(#blue)" />
          <path d="M14 26Q13 16 26 11 17 18 23 23q-4 6-9 3z" fill="#3f7fc6" />
          <path d="M3 41Q12 30 24 31q12-5 9-10-3-4-9-1 8-7 16-2 6 7-6 14Q20 42 3 41z" fill="url(#green)" />
        </svg>
        <WatermarkText>
          极光下载站
          <span>www.xz7.com</span>
        </WatermarkText>
      </Watermark>
    </Shell>
  );
}
